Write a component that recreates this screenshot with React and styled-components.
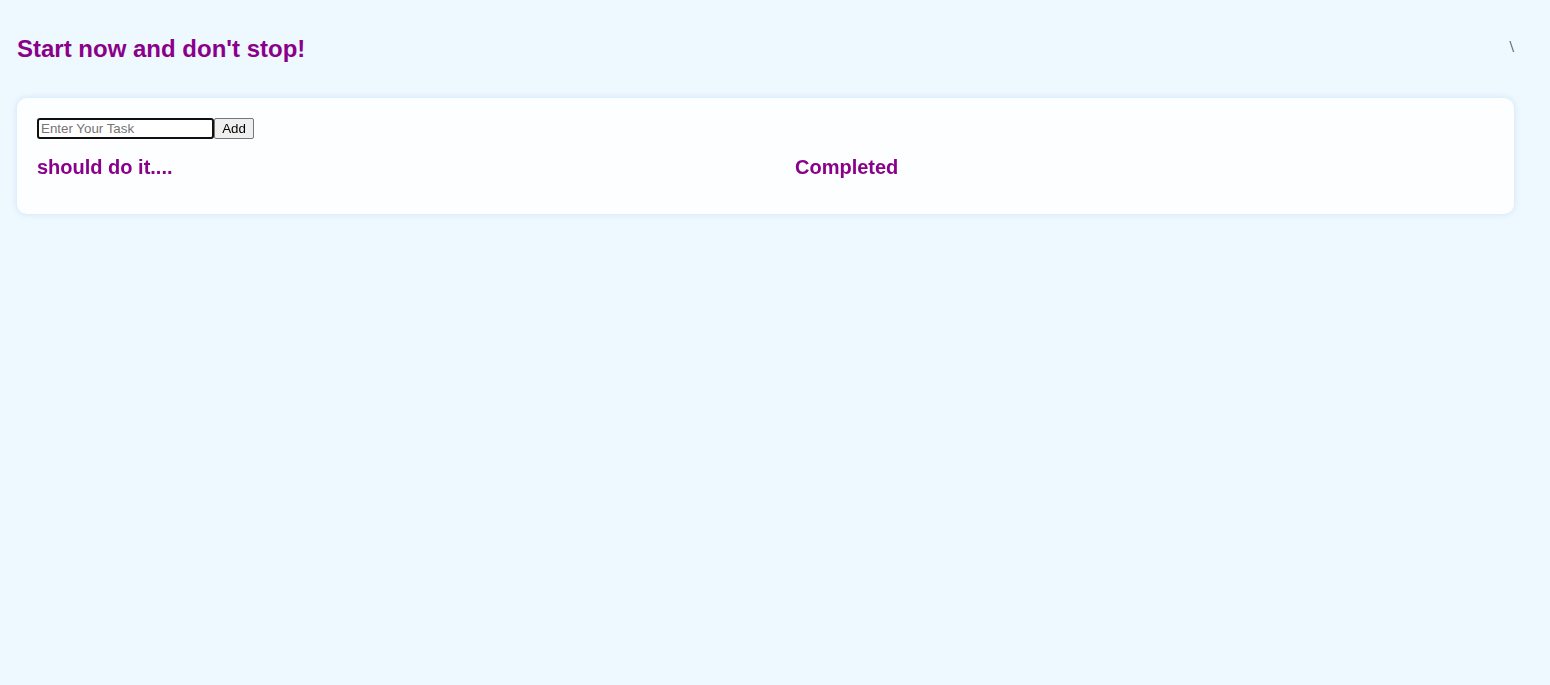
import React from "react";
import styled, { createGlobalStyle } from "styled-components";

const Global = createGlobalStyle`
  html, body {
    margin: 0;
    padding: 0;
    background: #eef8ff;
  }
  body {
    font-family: "Liberation Sans", Arial, sans-serif;
    min-height: calc(100vh + 16px);
  }
`;

const Page = styled.div`
  padding: 35px 36px 0 17px;
`;

const Header = styled.header`
  display: flex;
  justify-content: space-between;
  align-items: flex-start;
`;

const Title = styled.h2`
  margin: 0;
  font-size: 24px;
  line-height: 28px;
  font-weight: 700;
  color: #8b008b;
`;

const Slash = styled.span`
  font-family: "Liberation Serif", "Times New Roman", serif;
  font-size: 16px;
  line-height: 18px;
  margin-top: 3px;
  color: #222;
`;

const Card = styled.section`
  margin-top: 35px;
  background: #fcfeff;
  border-radius: 10px;
  box-shadow: 0 0 6px rgba(150, 190, 220, 0.35);
  padding: 20px 20px 35px;
`;

const Form = styled.form`
  display: flex;
  align-items: stretch;
  height: 21px;
`;

const TaskInput = styled.input`
  box-sizing: border-box;
  width: 177px;
  height: 21px;
  margin: 0;
  padding: 1px 2px;
  border: 2px solid #101010;
  border-radius: 3px;
  outline: none;
  font-family: "Liberation Sans", Arial, sans-serif;
  font-size: 13.33px;
  color: #000;
  background: #fff;
  &::placeholder {
    color: #757575;
  }
`;

const AddButton = styled.button`
  box-sizing: border-box;
  width: 40px;
  height: 21px;
  margin: 0;
  padding: 0;
  border: 1px solid #767676;
  border-radius: 2px;
  background: #efefef;
  font-family: "Liberation Sans", Arial, sans-serif;
  font-size: 13.33px;
  color: #000;
`;

const Columns = styled.div`
  display: grid;
  grid-template-columns: 1fr 1fr;
  column-gap: 59px;
  margin-top: 16px;
`;

const ColumnTitle = styled.h3`
  margin: 0;
  font-size: 20px;
  line-height: 24px;
  font-weight: 700;
  color: #8b008b;
`;

export default function App() {
  return (
    <>
      <Global />
      <Page>
        <Header>
          <Title>Start now and don't stop!</Title>
          <Slash>\</Slash>
        </Header>
        <Card>
          <Form onSubmit={(e) => e.preventDefault()}>
            <TaskInput type="text" placeholder="Enter Your Task" autoFocus />
            <AddButton type="submit">Add</AddButton>
          </Form>
          <Columns>
            <div>
              <ColumnTitle>should do it....</ColumnTitle>
            </div>
            <div>
              <ColumnTitle>Completed</ColumnTitle>
            </div>
          </Columns>
        </Card>
      </Page>
    </>
  );
}
